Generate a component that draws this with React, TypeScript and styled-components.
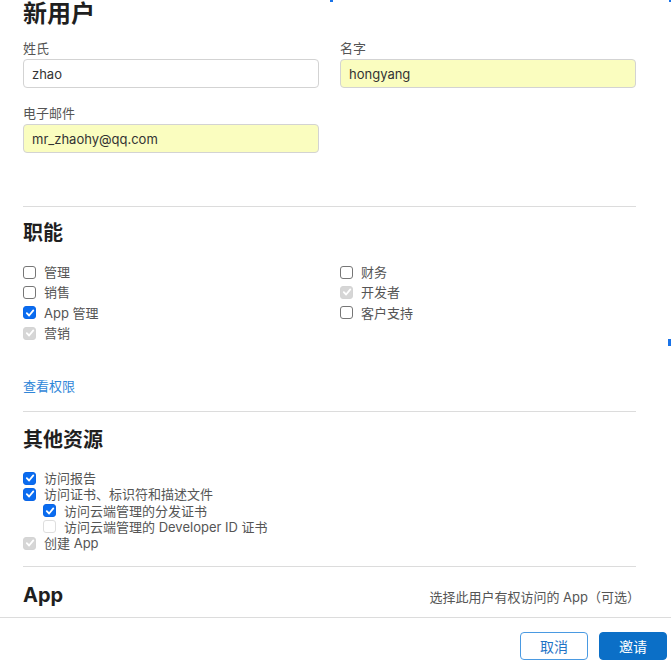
import React from 'react';
import styled, { createGlobalStyle } from 'styled-components';

type BoxState = 'off' | 'on' | 'disabledOn' | 'disabledOff';

const GlobalStyle = createGlobalStyle`
  html, body {
    margin: 0;
    padding: 0;
    background: #ffffff;
  }
  body {
    font-family: Inter, "Noto Sans CJK SC", sans-serif;
    color: #333333;
  }
`;

const roles: { left: [string, BoxState][]; right: [string, BoxState][] } = {
  left: [
    ['管理', 'off'],
    ['销售', 'off'],
    ['App 管理', 'on'],
    ['营销', 'disabledOn'],
  ],
  right: [
    ['财务', 'off'],
    ['开发者', 'disabledOn'],
    ['客户支持', 'off'],
  ],
};

const resources: { label: string; state: BoxState; nested?: boolean }[] = [
  { label: '访问报告', state: 'on' },
  { label: '访问证书、标识符和描述文件', state: 'on' },
  { label: '访问云端管理的分发证书', state: 'on', nested: true },
  { label: '访问云端管理的 Developer ID 证书', state: 'disabledOff', nested: true },
  { label: '创建 App', state: 'disabledOn' },
];

function Check({ state }: { state: BoxState }) {
  const checked = state === 'on' || state === 'disabledOn';
  return (
    <Box $state={state}>
      {checked && (
        <svg width="10" height="10" viewBox="0 0 10 10">
          <path d="M1.8 5.2 L4.1 7.5 L8.3 2.4" fill="none" stroke="#fff" strokeWidth="1.8" strokeLinecap="round" strokeLinejoin="round" />
        </svg>
      )}
    </Box>
  );
}

export default function App() {
  return (
    <Page>
      <GlobalStyle />
      <Content>
        <Title>新用户</Title>
        <FieldGrid>
          <Field>
            <Label>姓氏</Label>
            <Input value="zhao" readOnly />
          </Field>
          <Field>
            <Label>名字</Label>
            <Input value="hongyang" readOnly $autofill />
          </Field>
          <Field>
            <Label>电子邮件</Label>
            <Input value="mr_zhaohy@qq.com" readOnly $autofill />
          </Field>
        </FieldGrid>

        <Divider $top={53} />

        <SectionTitle>职能</SectionTitle>
        <RoleGrid>
          <CheckList>
            {roles.left.map(([label, state]) => (
              <CheckRow key={label} $height={20.3}>
                <Check state={state} />
                <CheckLabel>{label}</CheckLabel>
              </CheckRow>
            ))}
          </CheckList>
          <CheckList>
            {roles.right.map(([label, state]) => (
              <CheckRow key={label} $height={20.3}>
                <Check state={state} />
                <CheckLabel>{label}</CheckLabel>
              </CheckRow>
            ))}
          </CheckList>
        </RoleGrid>

        <PermLink href="#">查看权限</PermLink>

        <Divider $top={17} />

        <SectionTitle $gap={15}>其他资源</SectionTitle>
        <ResourceList>
          {resources.map((r) => (
            <CheckRow key={r.label} $height={16.2} $nested={r.nested}>
              <Check state={r.state} />
              <CheckLabel>{r.label}</CheckLabel>
            </CheckRow>
          ))}
        </ResourceList>

        <Divider $top={15} />

        <AppRow>
          <AppTitle>App</AppTitle>
          <AppHint>选择此用户有权访问的 App（可选）</AppHint>
        </AppRow>
      </Content>

      <Footer>
        <Button>取消</Button>
        <Button $primary>邀请</Button>
      </Footer>

      <Handle style={{ left: 330, top: 0, width: 3, height: 2 }} />
      <Handle style={{ left: 669, top: 0, width: 2, height: 2 }} />
      <Handle style={{ left: 668, top: 339, width: 3, height: 7 }} />
    </Page>
  );
}

const Page = styled.div`
  position: relative;
  width: 671px;
  height: 671px;
  overflow: hidden;
  background: #ffffff;
`;

const Content = styled.div`
  padding: 0 35px 0 23px;
  display: flex;
  flex-direction: column;
`;

const Title = styled.h1`
  margin: 0;
  font-size: 24px;
  line-height: 28px;
  font-weight: 700;
  color: #1f1f1f;
`;

const FieldGrid = styled.div`
  display: grid;
  grid-template-columns: 296px 296px;
  column-gap: 21px;
  row-gap: 17px;
  margin-top: 12px;
`;

const Field = styled.div`
  display: flex;
  flex-direction: column;
  gap: 3px;
`;

const Label = styled.label`
  font-size: 13px;
  line-height: 16px;
  color: #555555;
`;

const Input = styled.input<{ $autofill?: boolean }>`
  box-sizing: border-box;
  width: 100%;
  height: 29px;
  padding: 0 8px;
  border: 1px solid #d3d3d3;
  border-radius: 4px;
  background: ${(p) => (p.$autofill ? '#fafdbf' : '#ffffff')};
  font-family: Inter, "Noto Sans CJK SC", sans-serif;
  font-size: 13px;
  color: #333333;
  outline: none;
`;

const Divider = styled.hr<{ $top: number }>`
  margin: ${(p) => p.$top}px 0 0 0;
  border: none;
  height: 1px;
  background: #dcdcdc;
`;

const SectionTitle = styled.h2<{ $gap?: number }>`
  margin: ${(p) => p.$gap ?? 13}px 0 0 0;
  font-size: 20px;
  line-height: 26px;
  font-weight: 700;
  color: #1f1f1f;
`;

const RoleGrid = styled.div`
  display: grid;
  grid-template-columns: 317px 296px;
  margin-top: 16px;
`;

const CheckList = styled.div`
  display: flex;
  flex-direction: column;
`;

const ResourceList = styled.div`
  display: flex;
  flex-direction: column;
  margin-top: 17px;
`;

const CheckRow = styled.div<{ $height: number; $nested?: boolean }>`
  display: flex;
  align-items: center;
  height: ${(p) => p.$height}px;
  padding-left: ${(p) => (p.$nested ? 20 : 0)}px;
`;

const Box = styled.span<{ $state: BoxState }>`
  box-sizing: border-box;
  width: 13px;
  height: 13px;
  border-radius: 3px;
  display: flex;
  align-items: center;
  justify-content: center;
  flex-shrink: 0;
  border: 1px solid
    ${(p) =>
      p.$state === 'on'
        ? '#0a66e8'
        : p.$state === 'off'
        ? '#767676'
        : p.$state === 'disabledOn'
        ? '#d4d4d4'
        : '#dedede'};
  background: ${(p) =>
    p.$state === 'on' ? '#0a6cf0' : p.$state === 'disabledOn' ? '#d6d6d6' : '#ffffff'};
`;

const CheckLabel = styled.span`
  margin-left: 8px;
  font-size: 13px;
  line-height: 16px;
  color: #555555;
  white-space: nowrap;
`;

const PermLink = styled.a`
  margin-top: 35px;
  align-self: flex-start;
  font-size: 13px;
  line-height: 16px;
  color: #2f86d8;
  text-decoration: none;
`;

const AppRow = styled.div`
  display: flex;
  justify-content: space-between;
  align-items: baseline;
  margin-top: 15px;
  margin-right: -4px;
`;

const AppTitle = styled.h2`
  margin: 0;
  font-size: 20px;
  line-height: 26px;
  font-weight: 700;
  color: #1f1f1f;
`;

const AppHint = styled.span`
  font-size: 13px;
  color: #555555;
`;

const Footer = styled.div`
  margin-top: 9px;
  border-top: 1px solid #dcdcdc;
  display: flex;
  justify-content: flex-end;
  gap: 11px;
  padding: 14px 4px 0 0;
`;

const Button = styled.button<{ $primary?: boolean }>`
  box-sizing: border-box;
  width: 68px;
  height: 28px;
  border-radius: 4px;
  border: 1px solid ${(p) => (p.$primary ? '#0b6fc7' : '#4a9ae2')};
  background: ${(p) => (p.$primary ? '#0b6fc7' : '#ffffff')};
  color: ${(p) => (p.$primary ? '#ffffff' : '#1f74c6')};
  font-family: Inter, "Noto Sans CJK SC", sans-serif;
  font-size: 14px;
  padding: 0;
  cursor: pointer;
`;

const Handle = styled.span`
  position: absolute;
  background: #1a73e8;
`;
